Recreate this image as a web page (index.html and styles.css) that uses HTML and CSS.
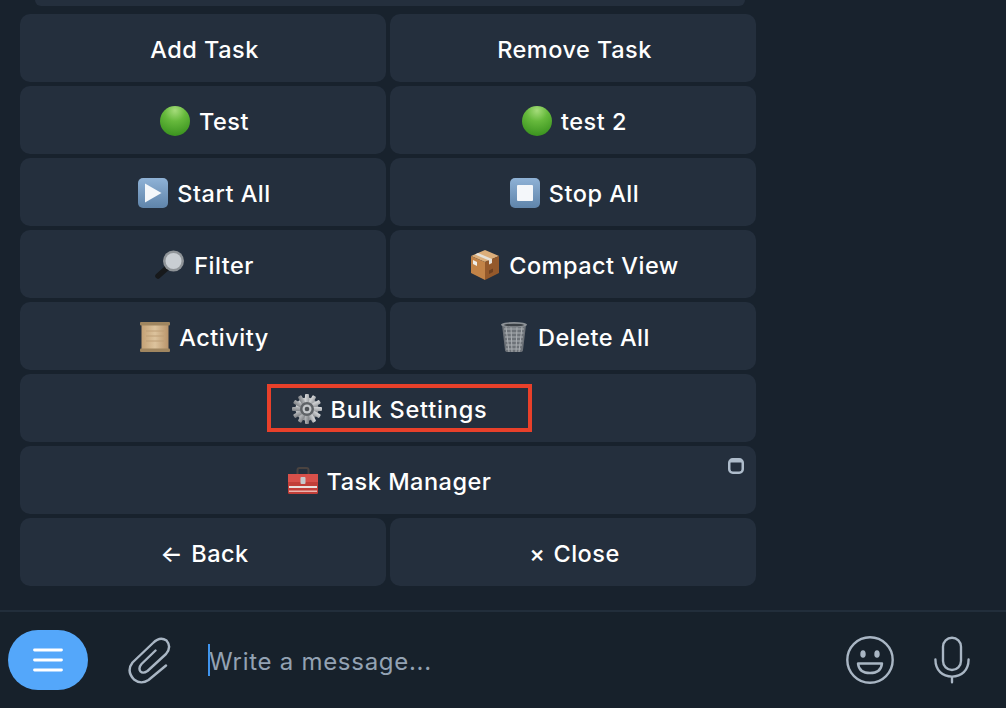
FILE: index.html
```html
<!DOCTYPE html>
<html lang="en">
<head>
<meta charset="utf-8">
<title>Bulk Settings</title>
<link rel="stylesheet" href="styles.css">
</head>
<body>
<svg class="defs" width="0" height="0" aria-hidden="true">
  <defs>
    <radialGradient id="greenBall" cx="50%" cy="15%" r="90%">
      <stop offset="0" stop-color="#a5dc7a"/><stop offset="0.4" stop-color="#66b93c"/><stop offset="1" stop-color="#368f1c"/>
    </radialGradient>
    <linearGradient id="blueKey" x1="0" y1="0" x2="0" y2="1">
      <stop offset="0" stop-color="#8fb2d6"/><stop offset="1" stop-color="#5f84aa"/>
    </linearGradient>
    <linearGradient id="steel" x1="0" y1="0" x2="1" y2="1">
      <stop offset="0" stop-color="#dcdee0"/><stop offset="1" stop-color="#7a7d81"/>
    </linearGradient>
    <linearGradient id="paper" x1="0" y1="0" x2="1" y2="0">
      <stop offset="0" stop-color="#c4a175"/><stop offset="0.5" stop-color="#dcc39d"/><stop offset="1" stop-color="#b9946a"/>
    </linearGradient>
  </defs>
</svg>
<main class="app">
  <section class="chat">
    <div class="bubble-end"></div>
    <div class="keyboard">
      <div class="row">
        <button class="key">Add Task</button>
        <button class="key">Remove Task</button>
      </div>
      <div class="row">
        <button class="key"><svg class="emoji" viewBox="0 0 30 30"><circle cx="15" cy="15" r="15" fill="url(#greenBall)"/></svg>Test</button>
        <button class="key"><svg class="emoji" viewBox="0 0 30 30"><circle cx="15" cy="15" r="15" fill="url(#greenBall)"/></svg>test 2</button>
      </div>
      <div class="row">
        <button class="key"><svg class="emoji" viewBox="0 0 30 30"><rect width="30" height="30" rx="5" fill="url(#blueKey)"/><path d="M7 5.500 23.500 15 7 24.500z" fill="#f4f7fa"/></svg>Start All</button>
        <button class="key"><svg class="emoji" viewBox="0 0 30 30"><rect width="30" height="30" rx="5" fill="url(#blueKey)"/><rect x="7" y="7" width="16" height="16" rx="1" fill="#f4f7fa"/></svg>Stop All</button>
      </div>
      <div class="row">
        <button class="key"><svg class="emoji" viewBox="0 0 30 30"><path d="M12 18 3 26" stroke="#17191b" stroke-width="5.500" stroke-linecap="round"/><circle cx="18.500" cy="11" r="10.500" fill="#8f9498"/><circle cx="18.500" cy="11" r="8" fill="#c9ced3"/></svg>Filter</button>
        <button class="key"><svg class="emoji" viewBox="0 0 30 30"><path d="M15 0 29 6 15 12 1 6z" fill="#dcae7a"/><path d="M1 6 15 12V30L1 23z" fill="#c28347"/><path d="M29 6 15 12V30L29 23z" fill="#94592b"/><path d="M8 3 22 9V13L19 14.500V10.500L5 4.500z" fill="#e6e1d8"/><path d="M19 20.500 23 18.500V22L19 24z" fill="#6f4120"/><path d="M3 10 7 12V16L3 14z" fill="#f0eee9"/></svg>Compact View</button>
      </div>
      <div class="row">
        <button class="key"><svg class="emoji" viewBox="0 0 30 30"><rect x="1.500" y="2" width="27" height="26" fill="url(#paper)"/><rect x="0" y="0" width="30" height="3.500" rx="1" fill="#a08660"/><rect x="0" y="26.500" width="30" height="3.500" rx="1" fill="#a08660"/><path d="M6 9H24M6 14H24M6 19H24" stroke="#bd9e76" stroke-width="1"/></svg>Activity</button>
        <button class="key"><svg class="emoji" viewBox="0 0 30 30"><path d="M3 3H27L24 28Q24 30 21 30H9Q6 30 6 28z" fill="#6d7278"/><path d="M5 7H25M5.500 11H24.500M6 15H24M6.500 19H23.500M7 23H23M7 27H22" stroke="#a9adb1" stroke-width="1.200"/><path d="M7 5 10 30M12 5 13 30M18 5 17 30M23 5 20 30" stroke="#a9adb1" stroke-width="1"/><ellipse cx="15" cy="2.800" rx="13" ry="2.800" fill="#8c9196"/><ellipse cx="15" cy="3" rx="10" ry="1.300" fill="#3c4146"/></svg>Delete All</button>
      </div>
      <div class="row">
        <button class="key"><span class="marked"><svg class="emoji" viewBox="0 0 30 30"><g fill="url(#steel)"><circle cx="15" cy="15" r="11.500"/><rect x="13" y="0" width="4" height="30" rx="1"/><rect x="13" y="0" width="4" height="30" rx="1" transform="rotate(30 15 15)"/><rect x="13" y="0" width="4" height="30" rx="1" transform="rotate(60 15 15)"/><rect x="13" y="0" width="4" height="30" rx="1" transform="rotate(90 15 15)"/><rect x="13" y="0" width="4" height="30" rx="1" transform="rotate(120 15 15)"/><rect x="13" y="0" width="4" height="30" rx="1" transform="rotate(150 15 15)"/></g><circle cx="15" cy="15" r="7" fill="#5f6367"/><circle cx="15" cy="15" r="4.500" fill="#c3c6c9"/><circle cx="15" cy="15" r="2.300" fill="#4d5155"/></svg>Bulk Settings</span></button>
      </div>
      <div class="row">
        <button class="key key-corner"><svg class="emoji" viewBox="0 0 30 30"><path d="M9.500 9V4Q9.500 2 11.500 2H18.500Q20.500 2 20.500 4V9" fill="none" stroke="#4a4340" stroke-width="2"/><rect x="0" y="8" width="30" height="20" rx="1.500" fill="#c23f39"/><rect x="0" y="8" width="30" height="8" fill="#d8504a"/><rect x="1" y="20" width="28" height="2" fill="#e9e2df"/><rect x="1" y="24.500" width="28" height="1.500" fill="#e9b4ae"/><rect x="12.500" y="11" width="5" height="7" rx="1" fill="#c6c9cc"/></svg>Task Manager<svg class="corner" viewBox="0 0 16 16"><rect x="1.250" y="1.250" width="13.500" height="13.500" rx="3.500" fill="none" stroke="#aebccb" stroke-width="2.500"/><rect x="2" y="2" width="12" height="2.500" fill="#aebccb"/></svg></button>
      </div>
      <div class="row">
        <button class="key"><span class="plain-glyph">←</span>Back</button>
        <button class="key"><span class="plain-glyph">×</span>Close</button>
      </div>
    </div>
  </section>
  <footer class="composer">
    <button class="menu-btn" aria-label="Menu">
      <svg viewBox="0 0 30 24" width="30" height="24"><path d="M1.500 2H28.500M1.500 12H28.500M1.500 22H28.500" stroke="#fff" stroke-width="2.800" stroke-linecap="round"/></svg>
    </button>
    <svg class="clip" viewBox="0 0 44 48" width="44" height="48" fill="none" stroke="#a9b6c4" stroke-width="2.400" stroke-linecap="round" stroke-linejoin="round"><path d="M39 29.500 21.500 44Q14 49 7 43.500 -1 35 5.500 26.500L26 7Q33 0 39.500 4.500 45 11 39 18L20.500 35Q16 38 13.500 35.500 11 32 14.500 28L28.500 14.500"/></svg>
    <div class="input"><span class="caret"></span><span class="placeholder">Write a message...</span></div>
    <svg class="smile" viewBox="0 0 48 48" width="48" height="48" fill="none" stroke="#a9b6c4" stroke-width="2.400"><circle cx="24" cy="24" r="22.700"/><ellipse cx="17" cy="18" rx="2.700" ry="3.800" fill="#a9b6c4" stroke="none"/><ellipse cx="31" cy="18" rx="2.700" ry="3.800" fill="#a9b6c4" stroke="none"/><path d="M12 27.500H36Q35 37 24 37 13 37 12 27.500Z" stroke-linejoin="round"/></svg>
    <svg class="mic" viewBox="0 0 38 50" width="36" height="48" fill="none" stroke="#a9b6c4" stroke-width="2.500" stroke-linecap="round"><rect x="9.500" y="1.500" width="19" height="34" rx="9.500"/><path d="M1.500 24.500C1.500 36 9 42.500 19 42.500S36.500 36 36.500 24.500M19 42.500V48.500"/></svg>
  </footer>
</main>
</body>
</html>
```

FILE: styles.css
```css
* { box-sizing: border-box; }

html, body {
  margin: 0;
  height: 100%;
  overflow: hidden;
  background: #18222d;
}

.defs { position: absolute; }

.app {
  display: flex;
  flex-direction: column;
  height: 708px;
  font-family: Inter, "Liberation Sans", sans-serif;
}

.chat {
  flex: 1;
  padding-left: 20px;
  min-height: 0;
}

.bubble-end {
  width: 710px;
  height: 6px;
  margin: 0 0 8px 15px;
  background: #242f3d;
  border-radius: 0 0 16px 16px;
}

.keyboard {
  display: flex;
  flex-direction: column;
  gap: 4px;
  width: 736px;
}

.row {
  display: flex;
  gap: 4px;
}

.key {
  position: relative;
  flex: 1 1 0;
  height: 68px;
  display: flex;
  align-items: center;
  justify-content: center;
  padding: 2px 0 0 3px;
  border: 0;
  border-radius: 10px;
  background: #242f3d;
  color: #fff;
  font: 500 23.5px Inter, "Liberation Sans", sans-serif;
  letter-spacing: 0.5px;
}

.emoji {
  width: 30px;
  height: 30px;
  margin-right: 9px;
  flex: none;
}

.plain-glyph { margin-right: 8px; }

.marked {
  position: relative;
  display: flex;
  align-items: center;
  letter-spacing: 0.8px;
}

.marked::after {
  content: "";
  position: absolute;
  left: -25px;
  right: -45px;
  top: -10px;
  bottom: -8px;
  border: 4px solid #e8402a;
}

.corner {
  position: absolute;
  top: 12px;
  right: 12px;
  width: 16px;
  height: 16px;
}

.composer {
  flex: none;
  height: 98px;
  display: flex;
  align-items: center;
  background: #17212b;
  border-top: 2px solid #222e3b;
  padding: 0 36px 0 8px;
}

.menu-btn {
  width: 80px;
  height: 60px;
  display: flex;
  align-items: center;
  justify-content: center;
  padding: 0;
  border: 0;
  border-radius: 30px;
  background: #54a7fa;
  flex: none;
}

.clip {
  margin-left: 39px;
  flex: none;
}

.input {
  flex: 1;
  display: flex;
  align-items: center;
  margin-left: 37px;
}

.caret {
  width: 2px;
  height: 32px;
  background: #3f94ee;
  flex: none;
}

.placeholder {
  color: #93a2b3;
  font-size: 24px;
  letter-spacing: 0.72px;
  margin: 2px 0 0 -1px;
}

.smile { flex: none; }

.mic {
  flex: none;
  margin-left: 40px;
}
```
